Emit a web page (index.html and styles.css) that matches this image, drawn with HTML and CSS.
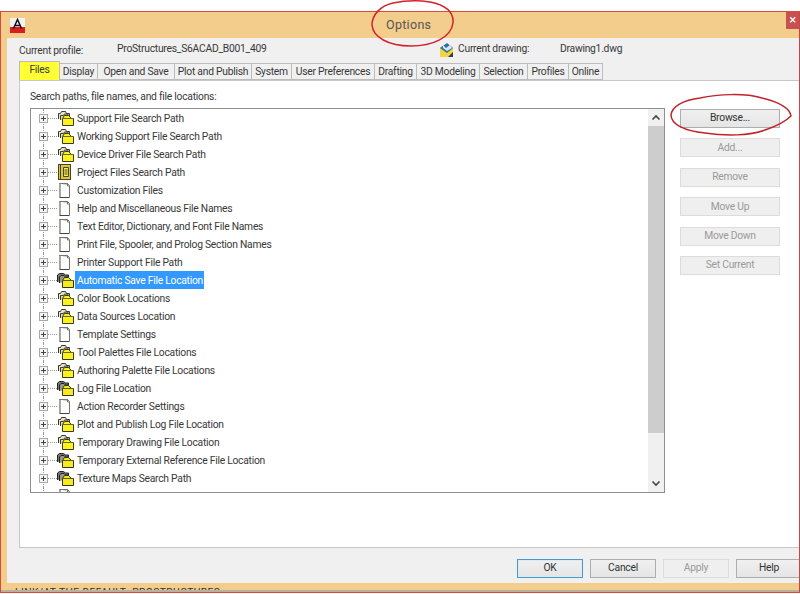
FILE: index.html
```html
<!DOCTYPE html>
<html lang="en">
<head>
<meta charset="utf-8">
<title>Options</title>
<link rel="stylesheet" href="styles.css">
</head>
<body>
<svg class="defs" width="0" height="0" aria-hidden="true">
  <symbol id="folder" viewBox="0 0 18 16">
    <path d="M1.500 9V3.500h2l1-2h4l1 2h3V8" fill="#e8e4c8" stroke="#3a3a30"/>
    <path d="M3.500 10V5.500h3l1-1.500h3l1 1.500h1V9" fill="#d8d4b0" stroke="#3a3a30"/>
    <path d="M5.500 8.500l2-3h4l3 3h2v7h-11z" fill="#fdf21c" stroke="#3a3a20"/>
    <path d="M5.500 8.500h11" stroke="#6a6a20" fill="none"/>
  </symbol>
  <symbol id="folder-dark" viewBox="0 0 18 16">
    <path d="M0.500 10V3l2-1.500h4l2 1.500h3v5" fill="#77776c" stroke="#222"/>
    <path d="M2.500 11V5l1.500-1.500h3l1.500 1.500h3v4" fill="#99958a" stroke="#222"/>
    <path d="M5.500 8.500l2-3h4l3 3h2v7h-11z" fill="#f6ea1c" stroke="#333318"/>
    <path d="M5.500 8.500h11" stroke="#5a5a18" fill="none"/>
  </symbol>
  <symbol id="doc" viewBox="0 0 18 16">
    <path d="M2.500 1.500h8l2 2v12h-10z" fill="#fff" stroke="#77776f"/>
    <path d="M2.500 1.500h8v2.500h2" fill="#c9c9c4" stroke="#77776f"/>
    <path d="M3 2v13" stroke="#a8a8a0" stroke-width="2" fill="none"/>
    <path d="M3 15.500h9" stroke="#444" fill="none"/>
  </symbol>
  <symbol id="book" viewBox="0 0 18 16">
    <rect x="1.500" y="0.500" width="12" height="15" fill="#d8c64a" stroke="#4c4418"/>
    <path d="M3.500 1v14" stroke="#4c4418" fill="none"/>
    <path d="M6.500 3.500h5v9h-5zM7.500 6h3M7.500 8h3M7.500 10h3" fill="#f4ec60" stroke="#4c4418"/>
  </symbol>
</svg>

<main class="window">
  <header class="titlebar">
    <svg class="app-icon" width="15" height="15" viewBox="0 0 15 15" aria-hidden="true">
      <rect x="0" y="0" width="15" height="9" fill="#f2f2f2"/>
      <rect x="0" y="9" width="15" height="6" fill="#d81e1e"/>
      <path d="M3.500 10.500L7.500 1.500l4 9M5 7.500h5" fill="none" stroke="#111" stroke-width="1.500"/>
    </svg>
    <h1 class="title">Options</h1>
    <div class="close" aria-hidden="true">×</div>
  </header>

  <div class="client">
    <div class="profile-row">
      <span class="label-profile">Current profile:</span>
      <span class="value-profile">ProStructures_S6ACAD_B001_409</span>
      <svg class="drawing-icon" width="15" height="16" viewBox="0 0 15 16" aria-hidden="true">
        <rect x="1" y="5" width="13" height="10" fill="#f4d43c"/>
        <path d="M1 6l7-5 6 5-6 5z" fill="#2d6fa8"/>
        <path d="M4 3l3 3 4-3 2 3-5 3-4-3z" fill="#dfe8f0"/>
        <path d="M9 15l5-5v5z" fill="#3a3a3a"/>
      </svg>
      <span class="label-drawing">Current drawing:</span>
      <span class="value-drawing">Drawing1.dwg</span>
    </div>

    <nav class="tabs">
      <span class="tab tab-active">Files</span>
      <span class="tab">Display</span>
      <span class="tab">Open and Save</span>
      <span class="tab">Plot and Publish</span>
      <span class="tab">System</span>
      <span class="tab">User Preferences</span>
      <span class="tab">Drafting</span>
      <span class="tab">3D Modeling</span>
      <span class="tab">Selection</span>
      <span class="tab">Profiles</span>
      <span class="tab">Online</span>
    </nav>

    <section class="panel">
      <div class="panel-main">
        <div class="panel-label">Search paths, file names, and file locations:</div>
        <div class="tree">
          <ul class="list">
            <li class="row"><i class="exp"></i><svg class="ico"><use href="#folder"/></svg><span class="txt">Support File Search Path</span></li>
            <li class="row"><i class="exp"></i><svg class="ico"><use href="#folder"/></svg><span class="txt">Working Support File Search Path</span></li>
            <li class="row"><i class="exp"></i><svg class="ico"><use href="#folder"/></svg><span class="txt">Device Driver File Search Path</span></li>
            <li class="row"><i class="exp"></i><svg class="ico"><use href="#book"/></svg><span class="txt">Project Files Search Path</span></li>
            <li class="row"><i class="exp"></i><svg class="ico"><use href="#doc"/></svg><span class="txt">Customization Files</span></li>
            <li class="row"><i class="exp"></i><svg class="ico"><use href="#doc"/></svg><span class="txt">Help and Miscellaneous File Names</span></li>
            <li class="row"><i class="exp"></i><svg class="ico"><use href="#doc"/></svg><span class="txt">Text Editor, Dictionary, and Font File Names</span></li>
            <li class="row"><i class="exp"></i><svg class="ico"><use href="#doc"/></svg><span class="txt">Print File, Spooler, and Prolog Section Names</span></li>
            <li class="row"><i class="exp"></i><svg class="ico"><use href="#doc"/></svg><span class="txt">Printer Support File Path</span></li>
            <li class="row"><i class="exp"></i><svg class="ico"><use href="#folder-dark"/></svg><span class="txt selected">Automatic Save File Location</span></li>
            <li class="row"><i class="exp"></i><svg class="ico"><use href="#folder"/></svg><span class="txt">Color Book Locations</span></li>
            <li class="row"><i class="exp"></i><svg class="ico"><use href="#folder"/></svg><span class="txt">Data Sources Location</span></li>
            <li class="row"><i class="exp"></i><svg class="ico"><use href="#doc"/></svg><span class="txt">Template Settings</span></li>
            <li class="row"><i class="exp"></i><svg class="ico"><use href="#folder"/></svg><span class="txt">Tool Palettes File Locations</span></li>
            <li class="row"><i class="exp"></i><svg class="ico"><use href="#folder"/></svg><span class="txt">Authoring Palette File Locations</span></li>
            <li class="row"><i class="exp"></i><svg class="ico"><use href="#folder-dark"/></svg><span class="txt">Log File Location</span></li>
            <li class="row"><i class="exp"></i><svg class="ico"><use href="#doc"/></svg><span class="txt">Action Recorder Settings</span></li>
            <li class="row"><i class="exp"></i><svg class="ico"><use href="#folder"/></svg><span class="txt">Plot and Publish Log File Location</span></li>
            <li class="row"><i class="exp"></i><svg class="ico"><use href="#folder"/></svg><span class="txt">Temporary Drawing File Location</span></li>
            <li class="row"><i class="exp"></i><svg class="ico"><use href="#folder-dark"/></svg><span class="txt">Temporary External Reference File Location</span></li>
            <li class="row"><i class="exp"></i><svg class="ico"><use href="#folder-dark"/></svg><span class="txt">Texture Maps Search Path</span></li>
            <li class="row"><i class="exp"></i><svg class="ico"><use href="#doc"/></svg></li>
          </ul>
          <div class="scrollbar">
            <svg class="arrow" width="16" height="17" viewBox="0 0 16 17" aria-hidden="true"><path d="M4.500 10.500L8 7l3.500 3.500" fill="none" stroke="#444" stroke-width="1.600"/></svg>
            <div class="thumb"></div>
            <div class="track"></div>
            <svg class="arrow" width="16" height="17" viewBox="0 0 16 17" aria-hidden="true"><path d="M4.500 6.500L8 10l3.500-3.500" fill="none" stroke="#444" stroke-width="1.600"/></svg>
          </div>
        </div>
      </div>
      <div class="side">
        <button class="btn">Browse...</button>
        <button class="btn off">Add...</button>
        <button class="btn off">Remove</button>
        <button class="btn off">Move Up</button>
        <button class="btn off">Move Down</button>
        <button class="btn off">Set Current</button>
      </div>
    </section>

    <footer class="actions">
      <button class="btn default">OK</button>
      <button class="btn">Cancel</button>
      <button class="btn off">Apply</button>
      <button class="btn">Help</button>
    </footer>
  </div>
  <div class="strip"><span class="strip-text">LINK/AT THE DEFAULT: PROSTRUCTURES</span></div>
</main>

<svg class="marks" width="800" height="594" viewBox="0 0 800 594" aria-hidden="true">
  <path d="M393 3C380 6 372 15 372 25C373 37 388 46 411 46C432 46 451 38 453 23C454 12 445 5 430 2C417 0 403 1 393 3" fill="none" stroke="#d2232a" stroke-width="1.500"/>
  <path d="M700 98C684 100 672 106 671 115C671 124 684 131 705 133C725 136 750 136 765 130C777 126 785 122 791 116C790 108 778 102 762 98C745 93 718 94 700 98" fill="none" stroke="#c2222a" stroke-width="1.500"/>
</svg>
</body>
</html>
```
FILE: styles.css
```css
* { box-sizing: border-box; }
html, body { margin: 0; padding: 0; }
body {
  width: 800px;
  height: 594px;
  overflow: hidden;
  background: #fff;
  position: relative;
  font: 10.300px/1 Roboto, "Liberation Sans", sans-serif;
  letter-spacing: -.25px;
  color: #383838;
}
.defs { position: absolute; }
.window {
  margin-top: 11px;
  height: 582px;
  width: 800px;
  border: 1px solid #d8493e;
  border-right-color: #c44;
  background: #f3cd8b;
  display: flex;
  flex-direction: column;
  overflow: hidden;
}
.titlebar {
  height: 26px;
  flex: none;
  display: flex;
  align-items: flex-start;
  padding-left: 9px;
  position: relative;
}
.app-icon { margin-top: 6px; }
.title {
  margin: 0;
  position: absolute;
  left: 385px;
  top: 5px;
  font-size: 12.500px;
  font-weight: 400;
  line-height: 16px;
  letter-spacing: .3px;
  color: #555;
}
.close {
  position: absolute;
  right: 0;
  top: 0;
  width: 13px;
  height: 17px;
  background: #c75050;
  color: #fff;
  font-size: 13px;
  line-height: 15px;
  text-align: center;
}
.client {
  margin-left: 6px;
  height: 545px;
  flex: none;
  background: #f0f0f0;
  padding-left: 12px;
  display: flex;
  flex-direction: column;
}
.profile-row {
  height: 24px;
  flex: none;
  display: flex;
  align-items: flex-start;
}
.label-profile { margin-top: 8px; width: 98px; }
.value-profile { margin-top: 6px; width: 322px; }
.drawing-icon { margin-top: 4px; width: 15px; }
.label-drawing { margin-top: 6px; margin-left: 4px; width: 102px; }
.value-drawing { margin-top: 6px; }
.tabs {
  height: 18px;
  flex: none;
  display: grid;
  grid-template-columns: 41px 38px 77px 77px 40px 83px 42px 63px 48px 41px 34px;
  position: relative;
  z-index: 1;
}
.tab {
  margin-top: 1px;
  height: 17px;
  border: 1px solid #bcbcbc;
  border-left-width: 0;
  background: #f0f0f0;
  line-height: 15px;
  text-align: center;
  white-space: nowrap;
}
.tab-active {
  margin-top: -1px;
  height: 19px;
  border-left-width: 1px;
  border-bottom: 0;
  background: #ffff33;
  line-height: 15px;
}
.panel {
  height: 468px;
  flex: none;
  border: 1px solid #c8c8c8;
  border-right: 0;
  background: #fff;
  display: flex;
  padding: 10px 0 0 10px;
}
.panel-main { width: 635px; flex: none; }
.panel-label { height: 17px; line-height: 12px; }
.tree {
  height: 385px;
  border: 1px solid #8e8e8e;
  display: flex;
  overflow: hidden;
}
.list {
  flex: 1;
  margin: 0;
  padding: 0;
  list-style: none;
  overflow: hidden;
}
.row {
  height: 18px;
  display: flex;
  align-items: center;
  padding-left: 8px;
  position: relative;
  white-space: nowrap;
}
.row::before {
  content: "";
  position: absolute;
  left: 12px;
  top: 0;
  bottom: 0;
  border-left: 1px dotted #999;
}
.exp {
  width: 9px;
  height: 9px;
  flex: none;
  position: relative;
  z-index: 1;
  border: 1px solid #a8a8a8;
  background:
    linear-gradient(#444, #444) center / 5px 1px no-repeat,
    linear-gradient(#444, #444) center / 1px 5px no-repeat,
    #f4f4f4;
}
.exp::after {
  content: "";
  position: absolute;
  left: 8px;
  top: 3px;
  width: 9px;
  border-top: 1px dotted #999;
}
.ico { width: 18px; height: 16px; margin-left: 9px; flex: none; }
.txt { padding: 1px 1px 0 2px; height: 18px; line-height: 18px; }
.selected { background: #3399ff; color: #fff; }
.scrollbar {
  width: 16px;
  flex: none;
  background: #f0f0f0;
  display: flex;
  flex-direction: column;
}
.arrow { flex: none; }
.thumb { height: 307px; flex: none; background: #cdcdcd; }
.track { flex: 1; }
.side {
  margin-left: 15px;
  padding-top: 18px;
  width: 100px;
  flex: none;
  display: flex;
  flex-direction: column;
  gap: 10.400px;
}
.btn {
  height: 19px;
  padding: 0;
  font: inherit;
  letter-spacing: inherit;
  color: #333;
  border: 1px solid #adadad;
  background: linear-gradient(#f0f0f0, #e5e5e5);
  flex: none;
}
.btn.off {
  color: #9a9a9a;
  background: #efefef;
  border-color: #dcdcdc;
}
.btn.default { border-color: #4d97cf; box-shadow: inset 0 0 0 1px #dbeaf5; }
.actions {
  flex: 1;
  padding: 11px 0 0 498px;
  display: flex;
  gap: 7px;
  align-items: flex-start;
}
.actions .btn { width: 66px; flex: none; }
.strip {
  height: 9px;
  flex: none;
  position: relative;
  overflow: hidden;
  border-bottom: 2px solid #b9b0a0;
}
.strip-text {
  position: absolute;
  left: 14px;
  top: 4px;
  line-height: 12px;
  color: #333;
  letter-spacing: .4px;
  white-space: nowrap;
}
.marks { position: absolute; left: 0; top: 0; pointer-events: none; }
```
